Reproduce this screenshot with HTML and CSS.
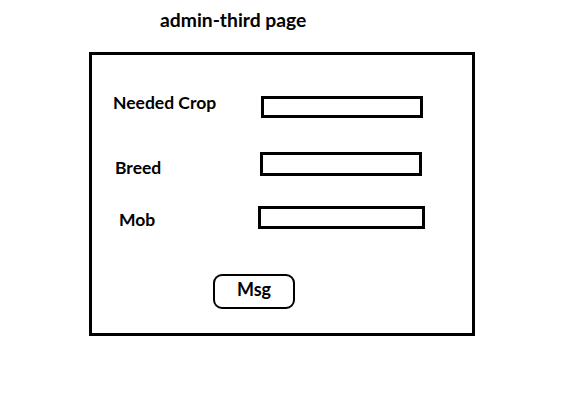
FILE: index.html
```html
<!DOCTYPE html>
<html>
<head>
<meta charset="utf-8">
<link rel="stylesheet" href="styles.css">
</head>
<body>
  <h1 class="title">admin-third page</h1>
  <form class="panel">
    <div class="row row-crop">
      <label class="label">Needed Crop</label>
      <span class="field"></span>
    </div>
    <div class="row row-breed">
      <label class="label">Breed</label>
      <span class="field"></span>
    </div>
    <div class="row row-mob">
      <label class="label">Mob</label>
      <span class="field"></span>
    </div>
    <div class="actions">
      <span class="btn">Msg</span>
    </div>
  </form>
</body>
</html>
```
FILE: styles.css
```css
* { box-sizing: border-box; }
html, body { margin: 0; padding: 0; background: #fff; }
body {
  width: 582px;
  height: 408px;
  font-family: Lato, "Open Sans", sans-serif;
  font-weight: 700;
  color: #000;
}
.title {
  margin: 0;
  padding: 10px 0 0 160px;
  font-size: 19.3px;
  line-height: 20px;
  font-weight: 700;
}
.panel {
  display: block;
  margin: 22px 0 0 89px;
  width: 386px;
  height: 284px;
  border: 3px solid #000;
  padding-top: 37px;
}
.row {
  display: flex;
  align-items: flex-start;
}
.label {
  font-size: 17.5px;
  line-height: 20px;
}
.field {
  display: block;
  border: 3px solid #000;
  background: #fff;
}
.row-crop .label { margin: 1px 0 0 21px; width: 148px; }
.row-crop .field { margin-top: 4px; width: 162px; height: 22px; }
.row-breed { margin-top: 34px; }
.row-breed .label { margin: 6px 0 0 23px; width: 145px; }
.row-breed .field { width: 162px; height: 24px; }
.row-mob { margin-top: 28px; }
.row-mob .label { margin: 4px 0 0 27px; width: 139px; }
.row-mob .field { width: 167px; height: 23px; }
.actions {
  margin: 44px 0 0 121px;
}
.btn {
  display: flex;
  align-items: center;
  justify-content: center;
  width: 82px;
  height: 35px;
  border: 2px solid #000;
  border-radius: 9px;
  font-size: 18px;
  padding-bottom: 5px;
}
```
